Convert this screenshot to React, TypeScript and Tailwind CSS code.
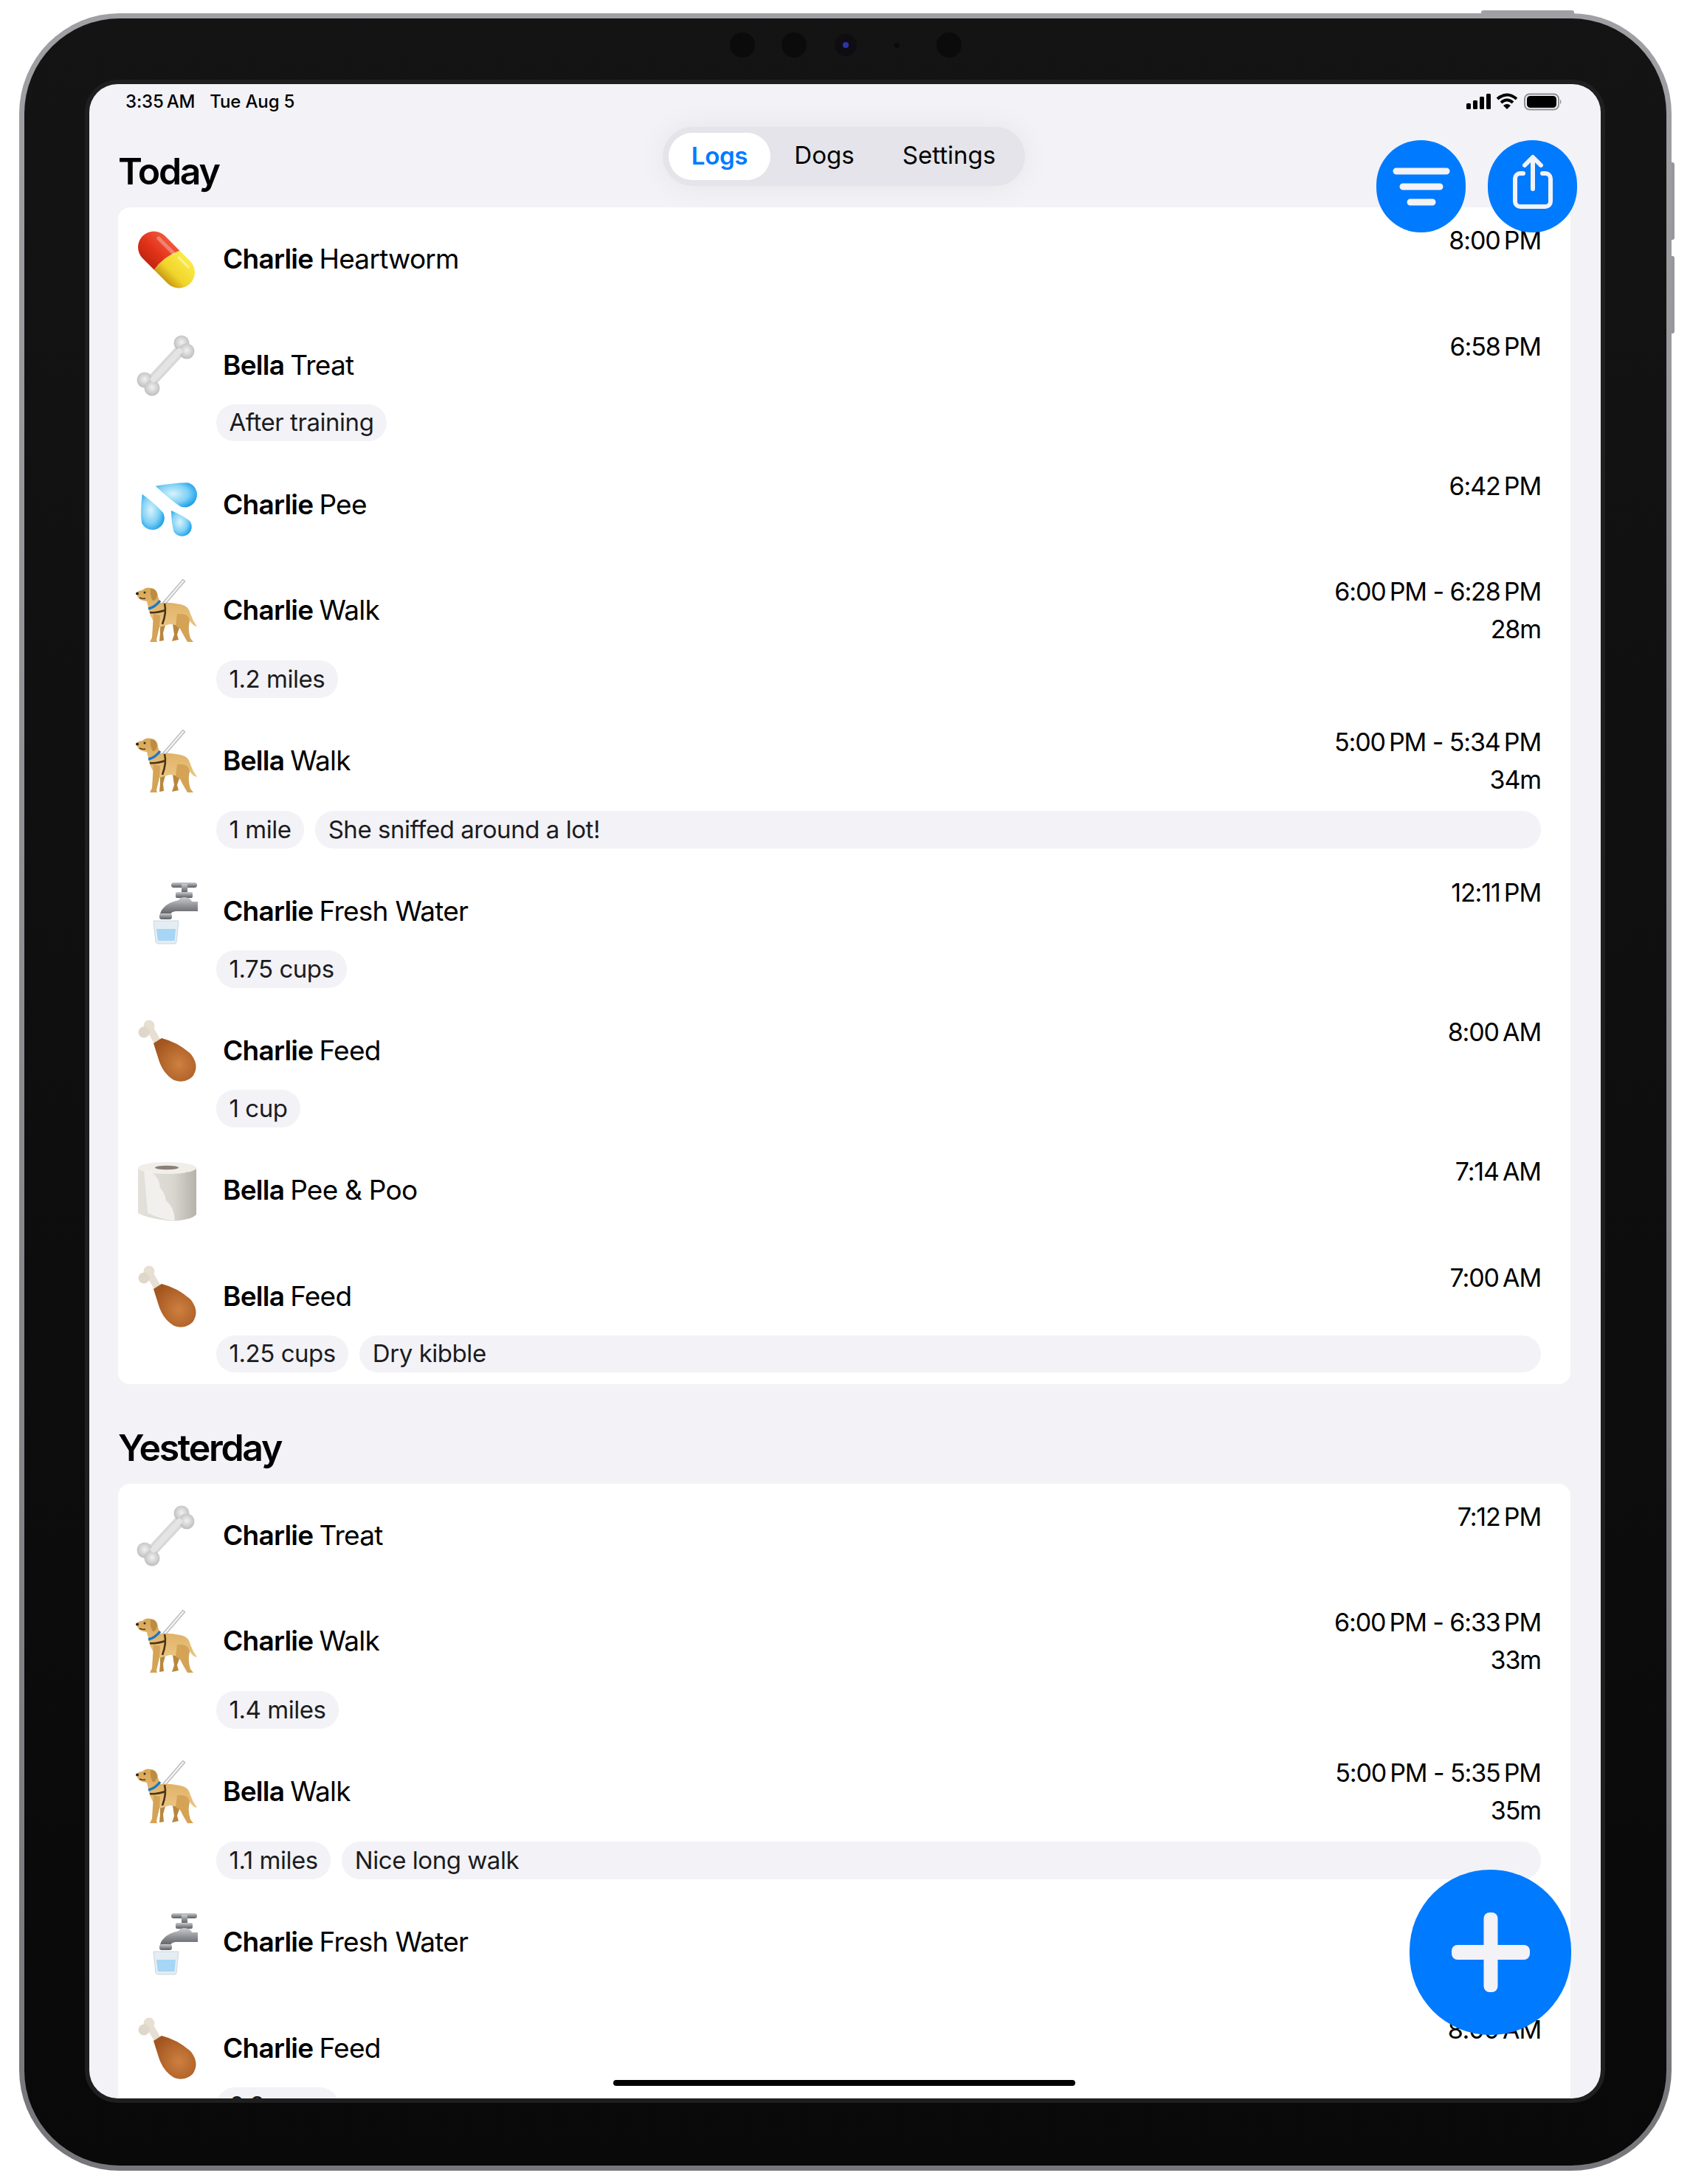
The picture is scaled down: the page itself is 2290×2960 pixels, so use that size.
import React from "react";

type LogRow = {
  dog: string;
  action: string;
  icon: "pill" | "bone" | "drops" | "dog" | "faucet" | "leg" | "roll";
  time: string;
  duration?: string;
  tags?: string[];
  note?: string;
};

const today: LogRow[] = [
  { dog: "Charlie", action: "Heartworm", icon: "pill", time: "8:00\u202fPM" },
  { dog: "Bella", action: "Treat", icon: "bone", time: "6:58\u202fPM", tags: ["After training"] },
  { dog: "Charlie", action: "Pee", icon: "drops", time: "6:42\u202fPM" },
  { dog: "Charlie", action: "Walk", icon: "dog", time: "6:00\u202fPM - 6:28\u202fPM", duration: "28m", tags: ["1.2 miles"] },
  { dog: "Bella", action: "Walk", icon: "dog", time: "5:00\u202fPM - 5:34\u202fPM", duration: "34m", tags: ["1 mile"], note: "She sniffed around a lot!" },
  { dog: "Charlie", action: "Fresh Water", icon: "faucet", time: "12:11\u202fPM", tags: ["1.75 cups"] },
  { dog: "Charlie", action: "Feed", icon: "leg", time: "8:00\u202fAM", tags: ["1 cup"] },
  { dog: "Bella", action: "Pee & Poo", icon: "roll", time: "7:14\u202fAM" },
  { dog: "Bella", action: "Feed", icon: "leg", time: "7:00\u202fAM", tags: ["1.25 cups"], note: "Dry kibble" },
];

const yesterday: LogRow[] = [
  { dog: "Charlie", action: "Treat", icon: "bone", time: "7:12\u202fPM" },
  { dog: "Charlie", action: "Walk", icon: "dog", time: "6:00\u202fPM - 6:33\u202fPM", duration: "33m", tags: ["1.4 miles"] },
  { dog: "Bella", action: "Walk", icon: "dog", time: "5:00\u202fPM - 5:35\u202fPM", duration: "35m", tags: ["1.1 miles"], note: "Nice long walk" },
  { dog: "Charlie", action: "Fresh Water", icon: "faucet", time: "12:05\u202fPM" },
  { dog: "Charlie", action: "Feed", icon: "leg", time: "8:00\u202fAM", tags: ["0.8 cups"] },
];

// teardrop from a pointed tip to a round bulb
function drop(tx: number, ty: number, cx: number, cy: number, r: number) {
  const a = Math.atan2(cy - ty, cx - tx);
  const px = Math.cos(a + Math.PI / 2) * r;
  const py = Math.sin(a + Math.PI / 2) * r;
  const dx = Math.cos(a) * r;
  const dy = Math.sin(a) * r;
  return `M${tx} ${ty} Q${cx + px * 0.8 - dx * 0.8} ${cy + py * 0.8 - dy * 0.8} ${cx + px} ${cy + py} A${r} ${r} 0 1 0 ${cx - px} ${cy - py} Q${cx - px * 0.8 - dx * 0.8} ${cy - py * 0.8 - dy * 0.8} ${tx} ${ty} Z`;
}

function Emoji({ name }: { name: LogRow["icon"] }) {
  return (
    <svg width="110" height="110" viewBox="0 0 110 110" className="shrink-0 overflow-visible">
      <defs>
        <linearGradient id="pillRed" x1="0" y1="0" x2="0" y2="1">
          <stop offset="0" stopColor="#f0583c" />
          <stop offset="0.55" stopColor="#e2331a" />
          <stop offset="1" stopColor="#c2260f" />
        </linearGradient>
        <linearGradient id="pillYellow" x1="0" y1="0" x2="0" y2="1">
          <stop offset="0" stopColor="#fbec45" />
          <stop offset="0.65" stopColor="#f0d42c" />
          <stop offset="1" stopColor="#c99a12" />
        </linearGradient>
        <radialGradient id="boneFill" cx="0.5" cy="0.45" r="0.65">
          <stop offset="0" stopColor="#f1f1f1" />
          <stop offset="1" stopColor="#b4b4b4" />
        </radialGradient>
        <radialGradient id="dropFill" cx="0.42" cy="0.45" r="0.62">
          <stop offset="0" stopColor="#d8f3fd" />
          <stop offset="0.6" stopColor="#7fd1f5" />
          <stop offset="1" stopColor="#1a9fe8" />
        </radialGradient>
        <linearGradient id="dogFill" x1="0" y1="0" x2="0" y2="1">
          <stop offset="0" stopColor="#d8a757" />
          <stop offset="1" stopColor="#ebc583" />
        </linearGradient>
        <linearGradient id="steel" x1="0" y1="0" x2="0" y2="1">
          <stop offset="0" stopColor="#c9ccd0" />
          <stop offset="0.5" stopColor="#8f9196" />
          <stop offset="1" stopColor="#5e5f63" />
        </linearGradient>
        <radialGradient id="legFill" cx="0.6" cy="0.6" r="0.65">
          <stop offset="0" stopColor="#cd8040" />
          <stop offset="1" stopColor="#a3551f" />
        </radialGradient>
        <linearGradient id="rollFill" x1="0" y1="0" x2="1" y2="0">
          <stop offset="0" stopColor="#e3e1db" />
          <stop offset="0.6" stopColor="#d9d7d0" />
          <stop offset="1" stopColor="#b5b2aa" />
        </linearGradient>
      </defs>

      {name === "pill" && (
        <g transform="translate(55.5 58) rotate(45)">
          <path d="M4 -21.5 H-24 A21.5 21.5 0 0 0 -24 21.5 H-2 Q-6 0 4 -21.5 Z" fill="url(#pillRed)" />
          <path d="M4 -21.5 H24 A21.5 21.5 0 0 1 24 21.5 H-2 Q-6 0 4 -21.5 Z" fill="url(#pillYellow)" />
          <path d="M-28 -13 H0" stroke="#fff" strokeOpacity="0.3" strokeWidth="5" strokeLinecap="round" />
          <path d="M10 -14 H28" stroke="#fff" strokeOpacity="0.45" strokeWidth="3" strokeLinecap="round" />
        </g>
      )}

      {name === "bone" && (
        <g fill="url(#boneFill)">
          <path d="M35 79 L75 36" stroke="#d8d8d8" strokeWidth="15" strokeLinecap="round" />
          <circle cx="76" cy="27" r="10.5" />
          <circle cx="83" cy="38" r="10.5" />
          <circle cx="26" cy="77" r="10.5" />
          <circle cx="36" cy="88" r="10.5" />
          <path d="M38 76 L73 38" stroke="#e4e4e4" strokeWidth="8" strokeLinecap="round" />
        </g>
      )}

      {name === "drops" && (
        <g fill="url(#dropFill)">
          <path d={drop(40.7, 31.8, 80, 43.5, 17)} />
          <path d={drop(22.7, 42.8, 36.7, 75, 16)} />
          <path d={drop(62, 65, 76.7, 86.8, 13)} />
        </g>
      )}

      {name === "dog" && (
        <g>
          <path d="M53 47 L78 18" stroke="#b9b9b9" strokeWidth="5" strokeLinecap="square" />
          <path d="M53 47 L78 18" stroke="#f4f4f4" strokeWidth="2.4" strokeLinecap="square" />
          <path d="M64 76 L74 78 L70 90 L72 97 L63 99 L66 90 Z" fill="#b8873f" />
          <path d="M47 70 L56 70 L51 88 L52 98 L46 99 L47 88 Z" fill="#b8873f" />
          <path d="M15 34 Q17 30 23 30 Q27 25 35 27 Q43 28 44 38 L47 47 Q60 46 74 49 Q86 51 88 62 Q91 71 97 79 Q91 78 87 71 L84 78 L60 76 L46 80 Q34 70 32 58 L29 45 Q20 44 17 40 Z" fill="url(#dogFill)" />
          <path d="M38 62 L47 64 L46 80 L42 97 L43 100 L33 100 L36 94 L37 78 Z" fill="#d4a356" />
          <path d="M70 62 Q86 60 87 72 Q84 82 88 95 L92 100 L84 100 Q78 90 74 82 L68 78 Z" fill="#d4a356" />
          <path d="M34 28 Q43 28 43 37 Q41 45 37 44 Q33 38 34 28 Z" fill="#bd8c42" />
          <circle cx="26" cy="33" r="1.5" fill="#3a2a14" />
          <circle cx="16" cy="34.5" r="2" fill="#2a2018" />
          <path d="M19 40 Q23 42 27 41" stroke="#4a3418" strokeWidth="1.4" fill="none" />
          <path d="M31 55 Q40 53 47 44" stroke="#1b78c8" strokeWidth="3.4" fill="none" />
          <path d="M33 60 Q42 61 54 57" stroke="#4a3418" strokeWidth="2.6" fill="none" />
          <path d="M53 48 Q56 60 50 76" stroke="#4a3418" strokeWidth="2.6" fill="none" />
        </g>
      )}

      {name === "faucet" && (
        <g transform="translate(0 12)">
          <rect x="62" y="6" width="35" height="7" rx="3.5" fill="url(#steel)" />
          <rect x="76" y="8" width="8" height="12" fill="url(#steel)" />
          <rect x="68" y="19" width="23" height="8" rx="2" fill="url(#steel)" />
          <path d="M98 32 H90 Q87 26 80 26 Q74 26 72 30 Q58 33 52 40 Q47 45 47 50 H61 Q61 46 68 45 H98 Z" fill="url(#steel)" />
          <rect x="46" y="48" width="17" height="8" rx="3" fill="url(#steel)" />
          <path d="M38 58 H72 L69 87 Q69 89 66 89 H45 Q42 89 41 87 Z" fill="#e4edf3" stroke="#cdd5da" strokeWidth="1" />
          <path d="M42 69 H68 L66.5 85 H44 Z" fill="#a6d5f6" />
        </g>
      )}

      {name === "leg" && (
        <g>
          <path d="M33 27 L44 46" stroke="#e6dfd2" strokeWidth="10" strokeLinecap="round" />
          <circle cx="32" cy="23" r="7.5" fill="#e6dfd2" />
          <circle cx="25" cy="32" r="7.5" fill="#dfd7c9" />
          <path d="M38 47 L49 40 Q72 46 89 62 Q101 78 91 92 Q80 102 66 97 Q50 88 44 66 Z" fill="url(#legFill)" />
        </g>
      )}

      {name === "roll" && (
        <g>
          <path d="M17 28 V88 Q30 96 66 99 Q90 97 96 90 V28 Z" fill="url(#rollFill)" />
          <ellipse cx="56.5" cy="27" rx="39.5" ry="8" fill="#f0eee9" />
          <ellipse cx="56" cy="26.5" rx="16" ry="2.8" fill="#8a8076" />
          <path d="M25 29 Q45 33 47 54 Q53 60 55 71 Q66 80 67 99 Q46 96 30 88 Z" fill="#f1f0ec" />
          <path d="M83 32 V90" stroke="#bdbab2" strokeWidth="1" strokeDasharray="2 3" />
        </g>
      )}
    </svg>
  );
}

function Tag({ label, grow }: { label: string; grow?: boolean }) {
  return (
    <div className={`flex h-[50.5px] items-center rounded-[25px] bg-[#f2f2f7] px-[17.5px] text-[33px] tracking-[-0.45px] text-[#1c1c1e] ${grow ? "flex-1" : ""}`}>
      {label}
    </div>
  );
}

function Row({ row }: { row: LogRow }) {
  const hasTags = !!row.tags;
  const bottom = hasTags ? "pb-[15.5px]" : "pb-[20.5px]";
  return (
    <div className={`pt-[13px] ${bottom}`}>
      <div className="flex h-[110px] justify-between pl-[10px] pr-[40px]">
        <div className="flex">
          <Emoji name={row.icon} />
          <div className="ml-[22px] mt-[2px] flex h-[110px] items-center text-[37px] tracking-[-0.75px] text-black">
            <span className="font-semibold">{row.dog}</span>
            <span className="ml-[8px]">{row.action}</span>
          </div>
        </div>
        <div className="mt-[6px] text-right text-[34px] leading-[51px] tracking-[-1.1px] text-black">
          <div>{row.time}</div>
          {row.duration && <div>{row.duration}</div>}
        </div>
      </div>
      {hasTags && (
        <div className={`ml-[133px] mr-[40px] flex gap-[15px] ${row.duration ? "mt-[15px]" : ""}`}>
          {row.tags!.map((t) => (
            <Tag key={t} label={t} />
          ))}
          {row.note && <Tag label={row.note} grow />}
        </div>
      )}
    </div>
  );
}

function Section({ title, rows, top }: { title: string; rows: LogRow[]; top: string }) {
  return (
    <section className={top}>
      <h2 className="mb-[18px] text-[50px] font-semibold leading-[62px] tracking-[-2.3px] text-black">{title}</h2>
      <div className="rounded-[16px] bg-white">
        {rows.map((r, i) => (
          <Row key={i} row={r} />
        ))}
      </div>
    </section>
  );
}

function Round({ children }: { children: React.ReactNode }) {
  return <div className="flex h-[125px] w-[121px] items-center justify-center rounded-full bg-[#007aff]">{children}</div>;
}

export default function App() {
  return (
    <div className="h-[2960px] w-[2290px] bg-white pl-[26px] pt-[18px] font-['Inter',sans-serif]">
      <div className="relative h-[2924px] w-[2239px]">
        {/* hardware buttons */}
        <div className="absolute left-[1981px] top-[-4px] h-[8px] w-[126px] rounded-t-[3px] bg-[#a0a0a4]" />
        <div className="absolute left-[2236px] top-[202px] h-[105px] w-[7px] rounded-r-[3px] bg-[#97979b]" />
        <div className="absolute left-[2236px] top-[329px] h-[105px] w-[7px] rounded-r-[3px] bg-[#97979b]" />

        <div className="relative h-full w-full rounded-[136px] bg-gradient-to-b from-[#a0a0a4] to-[#77777b] p-[7px]">
          <div className="h-full w-full rounded-[129px] bg-gradient-to-b from-[#141414] to-[#090909] pl-[82px] pt-[83px]">
            <div className="inline-block rounded-[44px] border-[6px] border-[#1f1f1f]">
              <div className="relative h-[2730px] w-[2048px] overflow-hidden rounded-[38px] bg-[#f2f2f7] pl-[39px] pr-[41px] pt-[87px]">
                <Section title="Today" rows={today} top="" />
                <Section title="Yesterday" rows={yesterday} top="mt-[55px]" />

                {/* status bar */}
                <div className="absolute left-[49px] right-[52px] top-[10px] flex h-[28px] items-center justify-between text-[24px] font-medium tracking-[-0.15px] text-black">
                  <div className="flex gap-[20px]">
                    <span>3:35{"\u202f"}AM</span>
                    <span>Tue Aug 5</span>
                  </div>
                  <svg width="130" height="24" viewBox="0 0 130 24">
                    <rect x="0" y="14" width="6" height="8" rx="1.5" />
                    <rect x="9" y="10" width="6" height="12" rx="1.5" />
                    <rect x="18" y="5" width="6" height="17" rx="1.5" />
                    <rect x="27" y="1" width="6" height="21" rx="1.5" />
                    <path d="M42 8 Q55 -3 68 8 M47 13 Q55 6 63 13" fill="none" stroke="#000" strokeWidth="4" />
                    <path d="M55 22 L50 17 Q55 13 60 17 Z" />
                    <rect x="79" y="1.5" width="46" height="21" rx="6.5" fill="none" stroke="#8e8e93" strokeWidth="2" />
                    <rect x="82" y="4" width="40" height="16" rx="4.5" />
                    <path d="M127 8.5 Q130 12 127 15.5 Z" fill="#8e8e93" />
                  </svg>
                </div>

                {/* segmented tabs */}
                <div className="absolute left-[777px] top-[58px] flex h-[80px] w-[491px] items-center rounded-full bg-[#e4e4ea] pb-[1px] pl-[8px] text-[33px] text-black shadow-[0_0_40px_rgba(0,0,0,0.06)]">
                  <div className="flex h-[64px] w-[138px] items-center justify-center rounded-full bg-white font-semibold tracking-[-0.3px] text-[#007aff]">Logs</div>
                  <div className="w-[146px] pb-[2px] text-center">Dogs</div>
                  <div className="w-[192px] pb-[2px] text-center">Settings</div>
                </div>

                {/* top actions */}
                <div className="absolute right-[32px] top-[76px] flex gap-[30px]">
                  <Round>
                    <svg width="78" height="52" viewBox="0 0 78 52" fill="none" stroke="#f2f2f7" strokeWidth="9" strokeLinecap="round">
                      <path d="M5 5 H73 M14 26 H64 M24 47 H54" />
                    </svg>
                  </Round>
                  <Round>
                    <svg width="121" height="125" viewBox="0 0 121 125" fill="none" stroke="#f2f2f7" strokeWidth="6" strokeLinecap="round" strokeLinejoin="round">
                      <path d="M48 45 H44 a7 7 0 0 0 -7 7 V83 a7 7 0 0 0 7 7 H78 a7 7 0 0 0 7 -7 V52 a7 7 0 0 0 -7 -7 H74" />
                      <path d="M61 24 V66 M50 34 L61 23 L72 34" />
                    </svg>
                  </Round>
                </div>

                {/* add button */}
                <div className="absolute bottom-[86px] right-[40px] flex h-[224px] w-[219px] items-center justify-center rounded-full bg-[#007aff]">
                  <svg width="110" height="110" viewBox="0 0 110 110" fill="#f2f2f7">
                    <rect x="45.5" y="1" width="19" height="108" rx="8" />
                    <rect x="2" y="45" width="106" height="20" rx="8" />
                  </svg>
                </div>

                {/* home indicator */}
                <div className="absolute bottom-[17px] left-[710px] h-[8px] w-[626px] rounded-full bg-black" />
              </div>
            </div>
          </div>
        </div>

        {/* camera strip */}
        <div className="absolute left-0 right-0 top-[26px] flex justify-center gap-[36px]">
          <div className="h-[34px] w-[34px] rounded-full bg-[#0b0b0b]" />
          <div className="h-[34px] w-[34px] rounded-full bg-[#0b0b0b]" />
          <div className="flex h-[34px] w-[34px] items-center justify-center">
            <div className="flex h-[30px] w-[30px] items-center justify-center rounded-full bg-[#0e0e12]">
              <div className="h-[8px] w-[8px] rounded-full bg-[#2f34a8]" />
            </div>
          </div>
          <div className="flex h-[34px] w-[34px] items-center justify-center">
            <div className="h-[7px] w-[7px] rounded-full bg-[#0a0a0a]" />
          </div>
          <div className="h-[34px] w-[34px] rounded-full bg-[#0b0b0b]" />
        </div>
      </div>
    </div>
  );
}
